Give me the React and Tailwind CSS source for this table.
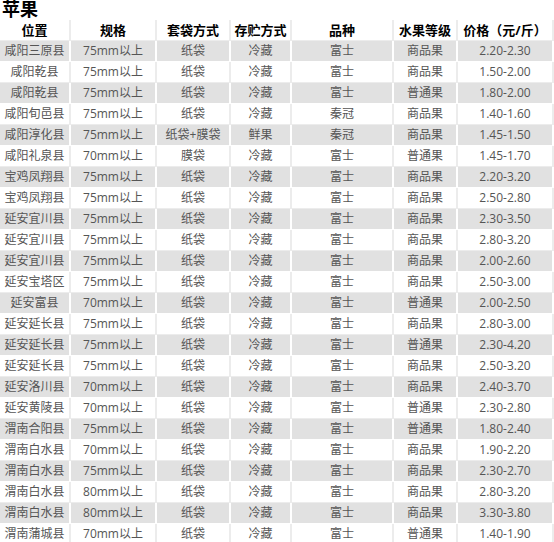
const heads = ["位置", "规格", "套袋方式", "存贮方式", "品种", "水果等级", "价格（元/斤）"];
const widths = ["w-[71px]", "w-[86px]", "w-[74px]", "w-[61px]", "w-[102px]", "w-[64px]", "w-[96px]"];

const rows = [
  ["咸阳三原县", "75mm以上", "纸袋", "冷藏", "富士", "商品果", "2.20-2.30"],
  ["咸阳乾县", "75mm以上", "纸袋", "冷藏", "富士", "商品果", "1.50-2.00"],
  ["咸阳乾县", "75mm以上", "纸袋", "冷藏", "富士", "普通果", "1.80-2.00"],
  ["咸阳旬邑县", "75mm以上", "纸袋", "冷藏", "秦冠", "商品果", "1.40-1.60"],
  ["咸阳淳化县", "75mm以上", "纸袋+膜袋", "鲜果", "秦冠", "商品果", "1.45-1.50"],
  ["咸阳礼泉县", "70mm以上", "膜袋", "冷藏", "富士", "普通果", "1.45-1.70"],
  ["宝鸡凤翔县", "75mm以上", "纸袋", "冷藏", "富士", "商品果", "2.20-3.20"],
  ["宝鸡凤翔县", "75mm以上", "纸袋", "冷藏", "富士", "商品果", "2.50-2.80"],
  ["延安宜川县", "75mm以上", "纸袋", "冷藏", "富士", "商品果", "2.30-3.50"],
  ["延安宜川县", "75mm以上", "纸袋", "冷藏", "富士", "商品果", "2.80-3.20"],
  ["延安宜川县", "75mm以上", "纸袋", "冷藏", "富士", "商品果", "2.00-2.60"],
  ["延安宝塔区", "75mm以上", "纸袋", "冷藏", "富士", "商品果", "2.50-3.00"],
  ["延安富县", "70mm以上", "纸袋", "冷藏", "富士", "普通果", "2.00-2.50"],
  ["延安延长县", "75mm以上", "纸袋", "冷藏", "富士", "商品果", "2.80-3.00"],
  ["延安延长县", "75mm以上", "纸袋", "冷藏", "富士", "普通果", "2.30-4.20"],
  ["延安延长县", "75mm以上", "纸袋", "冷藏", "富士", "商品果", "2.50-3.20"],
  ["延安洛川县", "70mm以上", "纸袋", "冷藏", "富士", "商品果", "2.40-3.70"],
  ["延安黄陵县", "70mm以上", "纸袋", "冷藏", "富士", "普通果", "2.30-2.80"],
  ["渭南合阳县", "75mm以上", "纸袋", "冷藏", "富士", "普通果", "1.80-2.40"],
  ["渭南白水县", "70mm以上", "纸袋", "冷藏", "富士", "商品果", "1.90-2.20"],
  ["渭南白水县", "75mm以上", "纸袋", "冷藏", "富士", "商品果", "2.30-2.70"],
  ["渭南白水县", "80mm以上", "纸袋", "冷藏", "富士", "商品果", "2.80-3.20"],
  ["渭南白水县", "80mm以上", "纸袋", "冷藏", "富士", "商品果", "3.30-3.80"],
  ["渭南蒲城县", "70mm以上", "纸袋", "冷藏", "富士", "普通果", "1.40-1.90"],
];

const App = () => {
  return (
    <div className="w-[554px] bg-white">
      <h1 className="h-[20px] pl-[2px] text-[18px] leading-[20px] font-bold text-black font-['Liberation_Serif','Noto_Sans_CJK_SC',serif]">
        苹果
      </h1>
      <table className="table-fixed border-separate border-spacing-0 w-[554px] font-['Open_Sans','Noto_Sans_CJK_SC',sans-serif]">
        <thead>
          <tr>
            {heads.map((h, i) => (
              <th
                key={h}
                className={`${widths[i]} h-[21px] p-0 text-center text-[13px] font-bold text-black border-r-2 border-b border-[#ececec] leading-[20px]`}
              >
                {h}
              </th>
            ))}
          </tr>
        </thead>
        <tbody>
          {rows.map((r, ri) => (
            <tr key={ri} className={ri % 2 === 0 ? "bg-[#e1e1e1]" : "bg-white"}>
              {r.map((c, ci) => (
                <td
                  key={ci}
                  className={`h-[21px] p-0 text-center text-[12px] text-[#555] leading-[20px] border-r-2 border-b whitespace-nowrap ${
                    ri % 2 === 0 ? "border-white" : "border-[#ececec]"
                  }`}
                >
                  {c}
                </td>
              ))}
            </tr>
          ))}
        </tbody>
      </table>
    </div>
  );
};

export default App;
